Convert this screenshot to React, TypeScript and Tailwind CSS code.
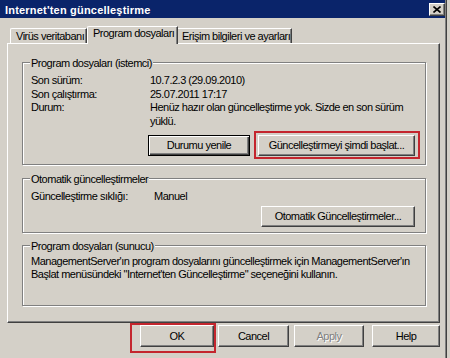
import React from "react";

const raised =
  "border border-t-white border-l-white border-r-[#404040] border-b-[#404040] shadow-[inset_-1px_-1px_0_#808080]";

function Btn({
  children,
  className = "",
  disabled = false,
  isDefault = false,
}: {
  children: React.ReactNode;
  className?: string;
  disabled?: boolean;
  isDefault?: boolean;
}) {
  const frame = isDefault
    ? "border border-black shadow-[inset_1px_1px_0_#fff,inset_-1px_-1px_0_#404040,inset_-2px_-2px_0_#808080]"
    : raised;
  return (
    <div
      className={`${frame} bg-[#d4d0c8] flex items-center justify-center leading-[13px] ${
        disabled ? "text-[#808080] [text-shadow:1px_1px_0_#fff]" : ""
      } ${className}`}
    >
      {children}
    </div>
  );
}

function Group({
  title,
  className = "",
  children,
}: {
  title: string;
  className?: string;
  children: React.ReactNode;
}) {
  return (
    <div
      className={`relative w-[404px] border border-[#808080] shadow-[inset_1px_1px_0_#fff,1px_1px_0_#fff] ${className}`}
    >
      <span className="absolute -top-[6px] left-[7px] bg-[#d4d0c8] px-[1px] leading-[13px]">
        {title}
      </span>
      {children}
    </div>
  );
}

export default function App() {
  return (
    <div className="relative w-[450px] h-[358px] overflow-hidden bg-[#d4d0c8] text-[11px] tracking-[-0.5px] text-black font-['Liberation_Sans',Arial,sans-serif]">
      <div className="flex h-full">
        <div className="w-[445px] flex flex-col">
          {/* Title bar */}
          <div className="h-[18px] bg-[#0a246a] flex justify-between items-start">
            <span className="pl-[5px] pt-[4px] leading-[13px] font-bold text-white tracking-[0.2px]">
              Internet'ten güncelleştirme
            </span>
            <div
              className={`mt-[3px] w-[16px] h-[13px] bg-[#d4d0c8] ${raised} flex items-center justify-center`}
            >
              <svg width="8" height="7" viewBox="0 0 8 7">
                <path
                  d="M0.5 0.5 L7.5 6.5 M7.5 0.5 L0.5 6.5"
                  stroke="#000"
                  strokeWidth="1.6"
                  fill="none"
                />
              </svg>
            </div>
          </div>

          {/* Tabs */}
          <div className="mt-[8px] pl-[10px] h-[17px] flex items-end">
            <div className="w-[77px] h-[15px] border-t border-l border-t-white border-l-white border-r border-r-[#404040] shadow-[inset_-1px_0_0_#808080] rounded-tl-[2px] pl-[5px] pt-[1px] leading-[13px] whitespace-nowrap">
              Virüs veritabanı
            </div>
            <div className="relative z-10 -mb-px w-[91px] h-[18px] bg-[#d4d0c8] border-t border-l border-t-white border-l-white border-r border-r-[#404040] shadow-[inset_-1px_0_0_#808080] rounded-tl-[2px] pl-[5px] leading-[13px] whitespace-nowrap">
              Program dosyaları
            </div>
            <div className="w-[114px] h-[15px] border-t border-t-white border-r border-r-[#404040] shadow-[inset_-1px_0_0_#808080] pl-[4px] pt-[1px] leading-[13px] whitespace-nowrap">
              Erişim bilgileri ve ayarları
            </div>
          </div>

          {/* Tab panel */}
          <div className="ml-[7px] w-[433px] h-[280px] border border-t-white border-l-white border-r-[#404040] border-b-[#404040] shadow-[inset_-1px_-1px_0_#808080] pl-[14px] pt-[18px]">
            <Group title="Program dosyaları (istemci)" className="h-[103px]">
              <div className="pl-[8px] pr-[10px] pt-[11px]">
                <div className="grid grid-cols-[119px_1fr] leading-[13.5px]">
                  <span>Son sürüm:</span>
                  <span>10.7.2.3 (29.09.2010)</span>
                  <span>Son çalıştırma:</span>
                  <span>25.07.2011 17:17</span>
                  <span>Durum:</span>
                  <span>
                    Henüz hazır olan güncelleştirme yok. Sizde en son sürüm
                    <br />
                    yüklü.
                  </span>
                </div>
                <div className="mt-[7px] flex justify-end gap-[8px]">
                  <Btn isDefault className="w-[102px] h-[21px]">
                    Durumu yenile
                  </Btn>
                  <div className="relative">
                    <Btn className="w-[157px] h-[21px]">
                      Güncelleştirmeyi şimdi başlat...
                    </Btn>
                    <div className="pointer-events-none absolute -left-[4px] -right-[5px] -top-[4px] -bottom-[3px] border-2 border-[#c4262e]" />
                  </div>
                </div>
              </div>
            </Group>

            <Group title="Otomatik güncelleştirmeler" className="mt-[13px] h-[55px]">
              <div className="pl-[8px] pr-[10px] pt-[11px]">
                <div className="grid grid-cols-[123px_1fr] leading-[13px]">
                  <span>Güncelleştirme sıklığı:</span>
                  <span>Manuel</span>
                </div>
                <div className="mt-[3px] flex justify-end">
                  <Btn className="w-[154px] h-[21px]">Otomatik Güncelleştirmeler...</Btn>
                </div>
              </div>
            </Group>

            <Group title="Program dosyaları (sunucu)" className="mt-[12px] h-[61px]">
              <div className="pl-[8px] pr-[10px] pt-[9px] leading-[13px]">
                ManagementServer'ın program dosyalarını güncelleştirmek için ManagementServer'ın
                <br />
                Başlat menüsündeki "Internet'ten Güncelleştirme" seçeneğini kullanın.
              </div>
            </Group>
          </div>

          {/* Dialog buttons */}
          <div className="mt-[2px] pl-[140px] flex">
            <div className="relative">
              <Btn className="w-[74px] h-[22px]">OK</Btn>
              <div className="pointer-events-none absolute -left-[10px] -right-[2px] -top-[2px] -bottom-[6px] border-2 border-[#c4262e]" />
            </div>
            <Btn className="ml-[4px] w-[71px] h-[22px]">Cancel</Btn>
            <Btn disabled className="ml-[5px] w-[70px] h-[22px]">
              Apply
            </Btn>
            <Btn className="ml-[8px] w-[68px] h-[22px]">Help</Btn>
          </div>
        </div>
        <div className="w-px bg-[#808080]" />
        <div className="w-px bg-[#404040]" />
      </div>
    </div>
  );
}
